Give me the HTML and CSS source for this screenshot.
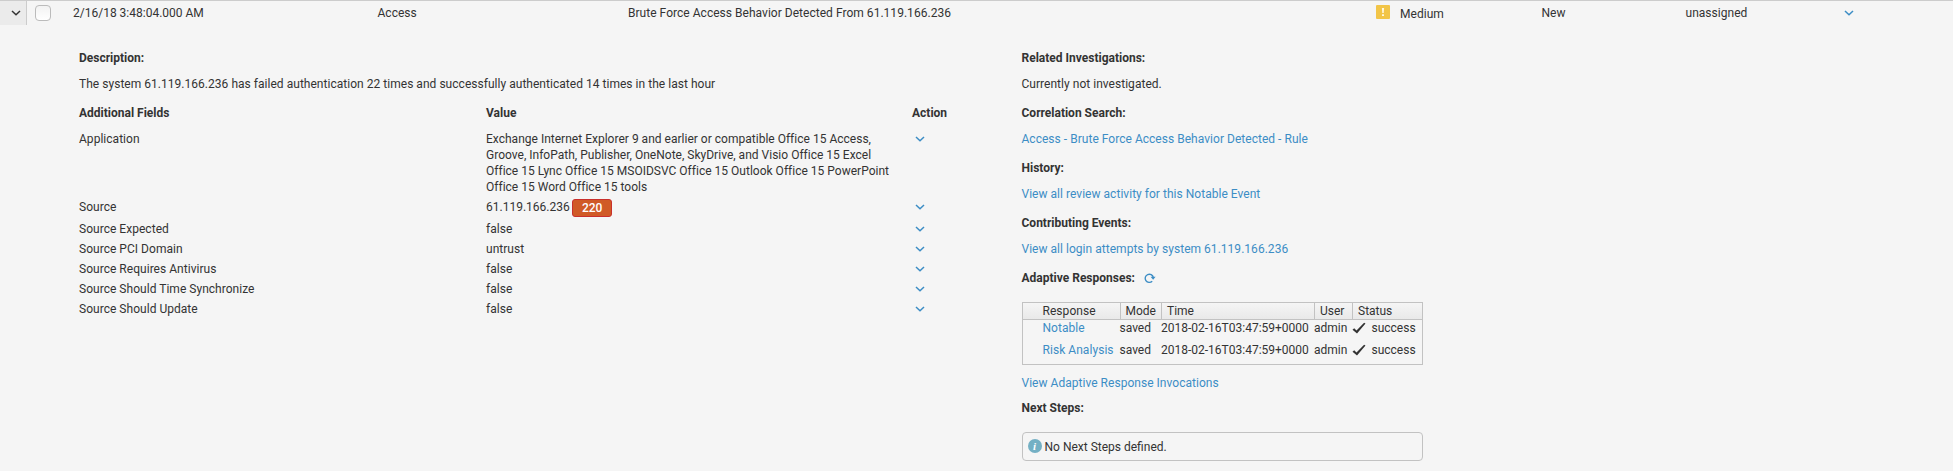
FILE: index.html
```
<!DOCTYPE html>
<html lang="en">
<head>
<meta charset="utf-8">
<title>Incident Review</title>
<link rel="stylesheet" href="styles.css">
</head>
<body>
<svg class="defs" width="0" height="0">
  <symbol id="chevron" viewBox="0 0 10 6"><path d="M1 1l4 3.8L9 1" fill="none" stroke="currentColor" stroke-width="1.5"/></symbol>
  <symbol id="check" viewBox="0 0 14 12"><path d="M0.5 7.7L2.2 6.3L4.5 8.5L12.1 0.7L13.5 1.6L5 11.4Z" fill="currentColor"/></symbol>
</svg>
<div class="event-row">
  <div class="expander"><svg class="chev"><use href="#chevron"/></svg></div>
  <div class="cell select"><span class="checkbox"></span></div>
  <div class="cell date">2/16/18 3:48:04.000 AM</div>
  <div class="cell">Access</div>
  <div class="cell">Brute Force Access Behavior Detected From 61.119.166.236</div>
  <div class="cell urgency"><svg class="urgency-icon" viewBox="0 0 14 14"><rect width="14" height="14" rx="1" fill="#f2c548"/><path d="M5.9 3h2.2l-.4 5H6.3zM6 9.2h2v1.7H6z" fill="#fff8e0"/></svg><span>Medium</span></div>
  <div class="cell">New</div>
  <div class="cell">unassigned</div>
  <div class="cell link"><svg class="chev"><use href="#chevron"/></svg></div>
</div>
<div class="details">
  <section class="main">
    <h4>Description:</h4>
    <p>The system 61.119.166.236 has failed authentication 22 times and successfully authenticated 14 times in the last hour</p>
    <div class="field head"><span>Additional Fields</span><span>Value</span><span>Action</span></div>
    <div class="field"><span>Application</span><span class="apps">Exchange Internet Explorer 9 and earlier or compatible Office 15 Access,<br>Groove, InfoPath, Publisher, OneNote, SkyDrive, and Visio Office 15 Excel<br>Office 15 Lync Office 15 MSOIDSVC Office 15 Outlook Office 15 PowerPoint<br>Office 15 Word Office 15 tools</span><span class="act"><svg class="chev"><use href="#chevron"/></svg></span></div>
    <div class="field source"><span>Source</span><span class="value-risk">61.119.166.236<b class="risk">220</b></span><span class="act"><svg class="chev"><use href="#chevron"/></svg></span></div>
    <div class="field"><span>Source Expected</span><span>false</span><span class="act"><svg class="chev"><use href="#chevron"/></svg></span></div>
    <div class="field"><span>Source PCI Domain</span><span>untrust</span><span class="act"><svg class="chev"><use href="#chevron"/></svg></span></div>
    <div class="field"><span>Source Requires Antivirus</span><span>false</span><span class="act"><svg class="chev"><use href="#chevron"/></svg></span></div>
    <div class="field"><span>Source Should Time Synchronize</span><span>false</span><span class="act"><svg class="chev"><use href="#chevron"/></svg></span></div>
    <div class="field"><span>Source Should Update</span><span>false</span><span class="act"><svg class="chev"><use href="#chevron"/></svg></span></div>
  </section>
  <section class="side">
    <h4>Related Investigations:</h4>
    <p>Currently not investigated.</p>
    <h4>Correlation Search:</h4>
    <p class="link">Access - Brute Force Access Behavior Detected - Rule</p>
    <h4>History:</h4>
    <p class="link">View all review activity for this Notable Event</p>
    <h4>Contributing Events:</h4>
    <p class="link">View all login attempts by system 61.119.166.236</p>
    <h4 class="responses-title">Adaptive Responses:<svg class="refresh" viewBox="0 0 12 12"><path d="M8.2 9.2A4.1 4.1 0 1 1 9.3 5.5" fill="none" stroke="currentColor" stroke-width="1.4"/><path d="M6.6 4.8h5L9.1 7.8z" fill="currentColor"/></svg></h4>
    <div class="responses">
      <div class="rrow rhead"><span>Response</span><span>Mode</span><span>Time</span><span>User</span><span>Status</span></div>
      <div class="rrow"><span class="link">Notable</span><span>saved</span><span>2018-02-16T03:47:59+0000</span><span>admin</span><span class="status"><svg class="check"><use href="#check"/></svg>success</span></div>
      <div class="rrow"><span class="link">Risk Analysis</span><span>saved</span><span>2018-02-16T03:47:59+0000</span><span>admin</span><span class="status"><svg class="check"><use href="#check"/></svg>success</span></div>
    </div>
    <p class="link invocations">View Adaptive Response Invocations</p>
    <h4>Next Steps:</h4>
    <div class="next"><span class="info">i</span>No Next Steps defined.</div>
  </section>
</div>
</body>
</html>
```
FILE: styles.css
```
* { box-sizing: border-box; }
body {
  margin: 0;
  height: 471px;
  background: #f5f5f5;
  color: #333;
  font: 12px/16px Roboto, "Liberation Sans", sans-serif;
  letter-spacing: 0.03px;
  overflow: hidden;
}
.defs { display: block; height: 0; }
.link { color: #3c8dc5; }
.chev { display: block; width: 10px; height: 6px; }
.event-row {
  display: grid;
  grid-template-columns: 27px 46px 304.5px 250.5px 748px 165.5px 144px 158.5px 1fr;
  height: 25px;
  border-top: 1px solid #ccc;
}
.cell { padding-top: 4px; white-space: nowrap; }
.date { letter-spacing: 0; }
.expander {
  padding: 9px 0 0 11px;
  background: #ebebeb;
  border-right: 1px solid #ccc;
}
.cell.select { padding: 4px 0 0 8px; }
.checkbox {
  display: block;
  width: 16px;
  height: 16px;
  border: 1px solid #bbb;
  border-radius: 4px;
  background: linear-gradient(#f2f2f2, #fff);
}
.urgency { display: flex; gap: 10px; }
.urgency span { padding-top: 1px; }
.urgency-icon { width: 14px; height: 14px; }
.cell.link { padding-top: 9px; }
.details { display: flex; padding: 25px 0 0 79px; }
.main { width: 942.5px; }
.side { width: 401.5px; }
h4, p { margin: 0; font-size: 12px; line-height: 16px; }
h4 { margin-bottom: 10px; letter-spacing: 0; }
p { margin-bottom: 13px; white-space: nowrap; }
.field {
  display: grid;
  grid-template-columns: 407px 426px 1fr;
  padding-bottom: 4px;
}
.field.head { font-weight: 700; padding-bottom: 10px; letter-spacing: 0; }
.field.source { height: 22px; padding-bottom: 0; }
.apps { letter-spacing: 0.012px; }
.act { padding: 5px 0 0 3px; color: #3c8dc5; }
.value-risk { display: flex; gap: 2.5px; letter-spacing: 0; }
.risk {
  width: 40px;
  height: 18px;
  border: 1px solid #c9302c;
  border-radius: 3px;
  background: #d05a26;
  color: #fff;
  font-weight: 500;
  text-align: center;
}
.responses-title { display: flex; margin-bottom: 16px; }
.refresh { width: 12px; height: 12px; margin: 2px 0 0 9px; color: #3c8dc5; }
.responses { height: 63px; border: 1px solid #c2c2c2; margin-bottom: 10px; }
.rrow {
  display: grid;
  grid-template-columns: 97px 41.5px 153px 38px 1fr;
  height: 22px;
  letter-spacing: 0;
  white-space: nowrap;
}
.rrow span:first-child { padding-left: 20px; letter-spacing: 0.05px; }
.rhead {
  height: 17px;
  background: linear-gradient(#f5f5f5, #e9e9e9);
  border-bottom: 1px solid #c2c2c2;
}
.rhead span { padding-left: 5px; border-left: 1px solid #c2c2c2; }
.rhead span:first-child { border-left: 0; }
.status { display: flex; gap: 6px; }
.check { width: 14px; height: 12px; margin: 2px 0 0 -0.5px; }
.invocations { margin-bottom: 9px; }
.side .invocations + h4 { margin-bottom: 16px; }
.next {
  display: flex;
  gap: 3px;
  height: 29px;
  padding: 6px 0 0 5px;
  border: 1px solid #c2c2c2;
  border-radius: 4px;
  letter-spacing: 0;
}
.info {
  width: 14px;
  height: 14px;
  border-radius: 50%;
  background: #74b0c4;
  color: #fff;
  font: italic bold 11px/14px "Liberation Serif", serif;
  text-align: center;
}
```
